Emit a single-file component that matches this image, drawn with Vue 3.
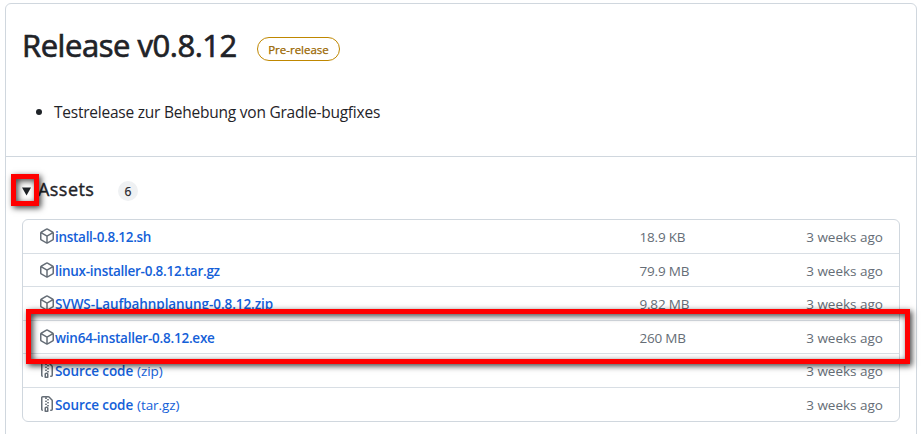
<script setup>
const icons = {
  package: 'm8.878.392 5.25 3.045c.54.314.872.89.872 1.514v6.098a1.75 1.75 0 0 1-.872 1.514l-5.25 3.045a1.75 1.75 0 0 1-1.756 0l-5.25-3.045A1.75 1.75 0 0 1 1 11.049V4.951c0-.624.332-1.201.872-1.514L7.122.392a1.75 1.75 0 0 1 1.756 0ZM7.875 1.69l-4.63 2.685L8 7.133l4.755-2.758-4.63-2.685a.248.248 0 0 0-.25 0ZM2.5 5.677v5.372c0 .09.047.171.125.216l4.625 2.683V8.432Zm6.25 8.271 4.625-2.683a.25.25 0 0 0 .125-.216V5.677L8.75 8.432Z',
  zip: 'M3.5 1.75v11.5c0 .09.048.173.126.217a.75.75 0 0 1-.752 1.298A1.748 1.748 0 0 1 2 13.25V1.75C2 .784 2.784 0 3.75 0h5.586c.464 0 .909.185 1.237.513l2.914 2.914c.329.328.513.773.513 1.237v8.586A1.75 1.75 0 0 1 12.25 15h-.5a.75.75 0 0 1 0-1.5h.5a.25.25 0 0 0 .25-.25V4.664a.25.25 0 0 0-.073-.177L9.513 1.573a.25.25 0 0 0-.177-.073H7.25a.75.75 0 0 1 0 1.5h-.5a.75.75 0 0 1 0-1.5h-3a.25.25 0 0 0-.25.25Zm3.75 8.75h.5c.966 0 1.75.784 1.75 1.75v3a.75.75 0 0 1-.75.75h-2.5a.75.75 0 0 1-.75-.75v-3c0-.966.784-1.75 1.75-1.75ZM6 5.25a.75.75 0 0 1 .75-.75h.5a.75.75 0 0 1 0 1.5h-.5A.75.75 0 0 1 6 5.25Zm.75 2.25h.5a.75.75 0 0 1 0 1.5h-.5a.75.75 0 0 1 0-1.5Zm1.25-.75A.75.75 0 0 1 8.75 6h.5a.75.75 0 0 1 0 1.5h-.5A.75.75 0 0 1 8 6.75ZM8.75 3h.5a.75.75 0 0 1 0 1.5h-.5a.75.75 0 0 1 0-1.5ZM8 9.75A.75.75 0 0 1 8.75 9h.5a.75.75 0 0 1 0 1.5h-.5A.75.75 0 0 1 8 9.75Zm-1 2.5v2.25h1v-2.25a.25.25 0 0 0-.25-.25h-.5a.25.25 0 0 0-.25.25Z',
}
const assets = [
  { name: 'install-0.8.12.sh', size: '18.9 KB', icon: 'package', tracking: -0.29 },
  { name: 'linux-installer-0.8.12.tar.gz', size: '79.9 MB', icon: 'package', tracking: -0.27 },
  { name: 'SVWS-Laufbahnplanung-0.8.12.zip', size: '9.82 MB', icon: 'package', tracking: -0.08 },
  { name: 'win64-installer-0.8.12.exe', size: '260 MB', icon: 'package', tracking: -0.23 },
  { name: 'Source code', kind: '(zip)', size: '', icon: 'zip', tracking: -0.1 },
  { name: 'Source code', kind: '(tar.gz)', size: '', icon: 'zip', tracking: -0.1 },
]
</script>

<template>
  <main class="page">
    <section class="card">
      <header class="release">
        <div class="title-row">
          <h1>Release v0.8.12</h1>
          <span class="label">Pre-release</span>
        </div>
        <ul class="notes">
          <li><span class="dot"></span><span>Testrelease zur Behebung von Gradle-bugfixes</span></li>
        </ul>
      </header>
      <div class="assets">
        <div class="summary">
          <svg class="caret" width="10" height="9" viewBox="0 0 10 9"><path d="M0 0.5h9L4.5 8.6z" /></svg>
          <h2>Assets</h2>
          <span class="counter">6</span>
        </div>
        <ul class="list">
          <li v-for="(a, i) in assets" :key="i" class="row">
            <svg class="icon" width="16" height="16" viewBox="0 0 16 16"><path :d="icons[a.icon]" /></svg>
            <a class="name" :style="{ letterSpacing: a.tracking + 'px' }"><b>{{ a.name }}</b><span v-if="a.kind" class="kind">{{ a.kind }}</span></a>
            <span class="size">{{ a.size }}</span>
            <span class="time">3 weeks ago</span>
          </li>
        </ul>
      </div>
    </section>
    <div class="mark mark-caret"></div>
    <div class="mark mark-row"></div>
  </main>
</template>

<style>
body {
  background: #fff;
  overflow: hidden;
}
</style>

<style scoped>
.page {
  position: relative;
  box-sizing: border-box;
  height: 434px;
  padding: 3px 7px 0 5px;
  overflow: hidden;
  color: #1f2328;
  font-family: "Open Sans", "Noto Sans", sans-serif;
}
.card {
  box-sizing: border-box;
  height: 450px;
  border: 1px solid #d0d7de;
  border-radius: 6px;
}
h1,
h2,
ul {
  margin: 0;
  padding: 0;
}
ul {
  list-style: none;
}
.release {
  box-sizing: border-box;
  height: 153px;
  padding: 19px 16px 0;
  border-bottom: 1px solid #d0d7de;
}
.title-row {
  display: flex;
  gap: 20px;
}
h1 {
  width: 215px;
  font-size: 31px;
  font-weight: 400;
  line-height: 44px;
  letter-spacing: -0.47px;
  white-space: nowrap;
  -webkit-text-stroke: 0.7px #1f2328;
}
.label {
  box-sizing: border-box;
  width: 83px;
  height: 24px;
  margin-top: 14px;
  border: 1px solid #bf8700;
  border-radius: 12px;
  color: #9a6700;
  font-size: 11.5px;
  line-height: 23px;
  text-align: center;
  white-space: nowrap;
  -webkit-text-stroke: 0.25px #9a6700;
}
.notes li {
  display: flex;
  align-items: center;
  gap: 12px;
  margin-top: 33px;
  padding-left: 14px;
  font-size: 15.5px;
  line-height: 24px;
  letter-spacing: -0.23px;
  white-space: nowrap;
}
.dot {
  width: 6px;
  height: 6px;
  border-radius: 50%;
  background: #1f2328;
}
.assets {
  padding: 16px 16px 0;
}
.summary {
  display: flex;
  align-items: center;
  height: 34px;
  margin-bottom: 12px;
}
.caret {
  margin-top: 2px;
  fill: #1f2328;
}
h2 {
  width: 57px;
  margin: -2px 0 0 6px;
  font-size: 18px;
  font-weight: 400;
  line-height: 30px;
  letter-spacing: 0.45px;
  -webkit-text-stroke: 0.4px #1f2328;
}
.counter {
  width: 20px;
  height: 20px;
  margin: 2px 0 0 23px;
  border-radius: 10px;
  background: #eff1f3;
  font-size: 12px;
  line-height: 21px;
  text-align: center;
  -webkit-text-stroke: 0.25px #1f2328;
}
.list {
  box-sizing: border-box;
  display: grid;
  grid-template-rows: 33px 33px 34px 33px 34px 34px;
  height: 203px;
  border: 1px solid #d0d7de;
  border-radius: 6px;
}
.row {
  display: grid;
  grid-template-columns: 16px 584.5px 1fr auto;
  padding: 0 16px;
  font-size: 13.5px;
  line-height: 35px;
  white-space: nowrap;
}
.row + .row {
  border-top: 1px solid #d8dee4;
}
.icon {
  margin-top: 8px;
  fill: #656d76;
}
.name {
  color: #1460d8;
}
.name b {
  font-weight: 600;
}
.kind {
  margin-left: 4px;
}
.size,
.time {
  color: #656d76;
}
.size {
  letter-spacing: -0.2px;
}
.mark {
  position: absolute;
  box-sizing: border-box;
  border: 5px solid #f00;
  box-shadow: 2px 2px 6px rgba(0, 0, 0, 0.75), inset 2px 2px 6px rgba(0, 0, 0, 0.75);
}
.mark-caret {
  left: 11px;
  top: 174px;
  width: 28px;
  height: 32px;
}
.mark-row {
  left: 26px;
  top: 309px;
  width: 884px;
  height: 55px;
}
</style>
